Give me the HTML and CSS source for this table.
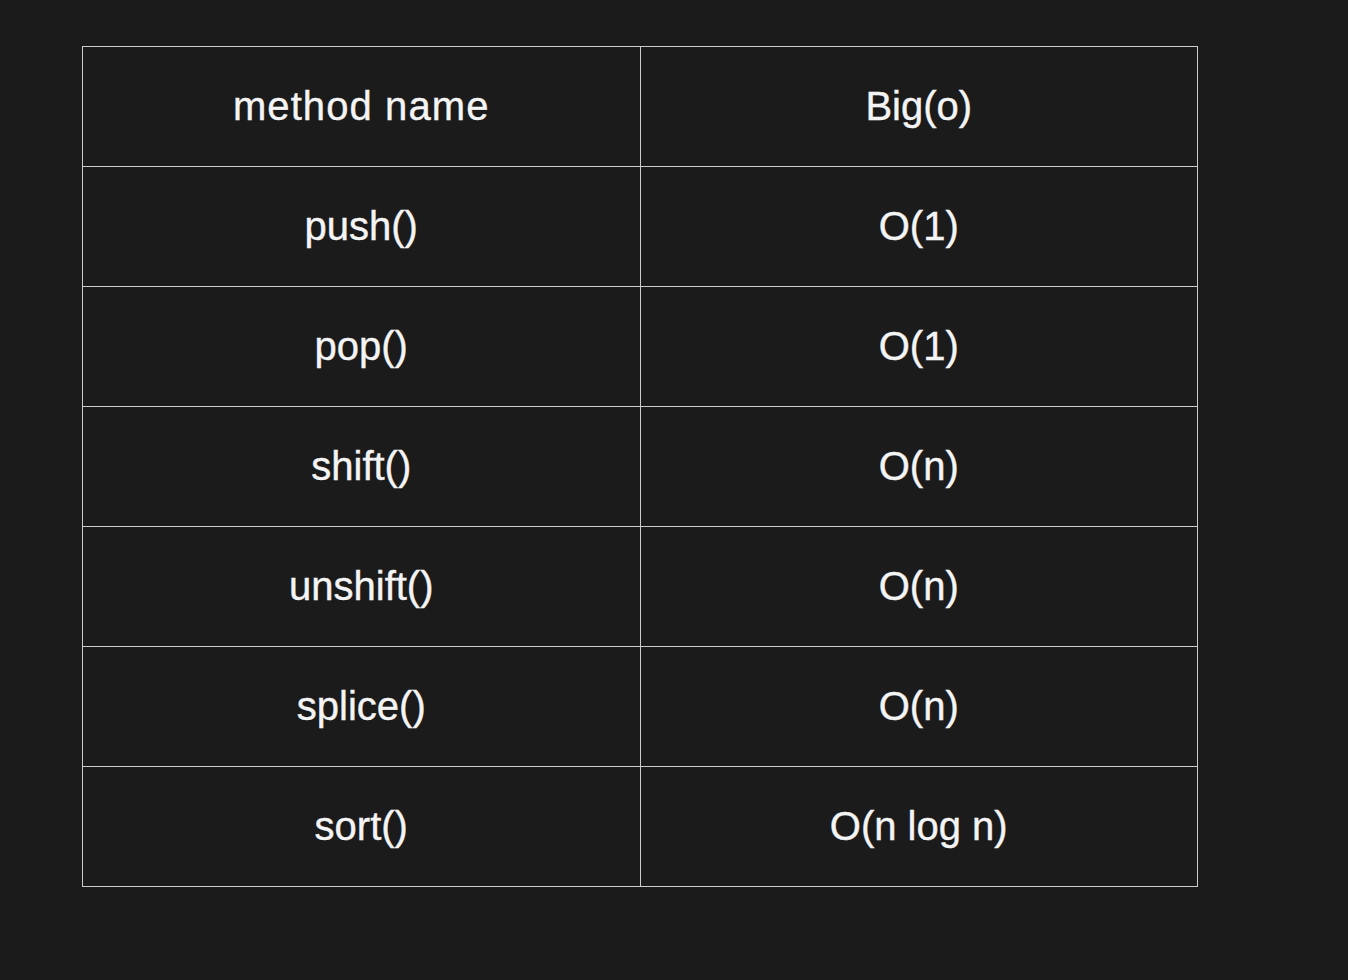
FILE: index.html
```html
<!DOCTYPE html>
<html lang="en">
<head>
<meta charset="utf-8">
<title>Array methods Big O</title>
<link rel="stylesheet" href="styles.css">
</head>
<body>
<main class="page">
  <table class="bigo">
    <tbody>
      <tr class="head"><td class="spread">method name</td><td>Big(o)</td></tr>
      <tr><td>push()</td><td>O(1)</td></tr>
      <tr><td>pop()</td><td>O(1)</td></tr>
      <tr><td>shift()</td><td>O(n)</td></tr>
      <tr><td>unshift()</td><td>O(n)</td></tr>
      <tr><td>splice()</td><td>O(n)</td></tr>
      <tr><td>sort()</td><td>O(n log n)</td></tr>
    </tbody>
  </table>
</main>
</body>
</html>
```
FILE: styles.css
```css
html, body {
  margin: 0;
  padding: 0;
  background: #1b1b1b;
}
body {
  width: 1348px;
  height: 980px;
  overflow: hidden;
  font-family: "Liberation Sans", Arial, sans-serif;
  color: #f4f4f4;
}
.page {
  padding: 46px 0 0 82px;
}
.bigo {
  border-collapse: collapse;
  width: 1116px;
  table-layout: fixed;
}
.bigo td {
  border: 1px solid #cccccc;
  height: 120px;
  padding: 0 0 1px 0;
  box-sizing: border-box;
  text-align: center;
  vertical-align: middle;
  font-size: 40px;
  line-height: 1;
  width: 50%;
  -webkit-text-stroke: 0.4px #f4f4f4;
}
.bigo td.spread {
  letter-spacing: 1.1px;
}
```
